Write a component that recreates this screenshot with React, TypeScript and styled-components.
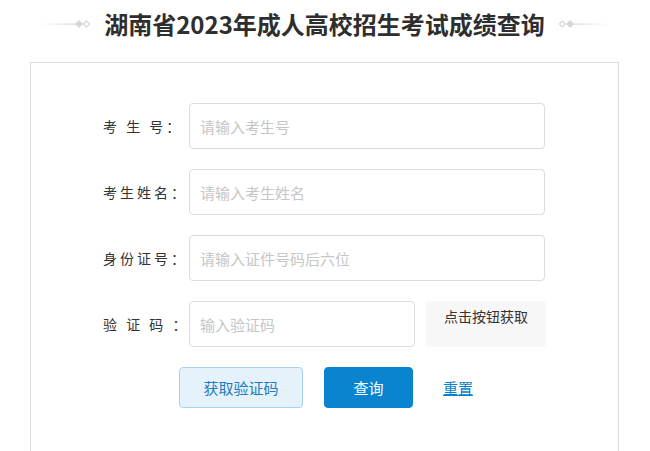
import React from "react";
import styled, { createGlobalStyle } from "styled-components";

const Global = createGlobalStyle`
  html, body { margin: 0; padding: 0; background: #fff; }
  body { font-family: "Noto Sans CJK SC", "Noto Sans", sans-serif; color: #333; }
  * { box-sizing: border-box; }
`;

const Page = styled.div`
  width: 650px;
  height: 451px;
  overflow: hidden;
  padding: 0 31px 0 30px;
`;

const Header = styled.div`
  display: flex;
  align-items: center;
  justify-content: center;
  gap: 13px;
  height: 48px;
  margin-bottom: 14px;
`;

const Title = styled.h1`
  margin: 0;
  font-size: 24px;
  font-weight: 700;
  color: #2e2e2e;
  line-height: 48px;
  letter-spacing: 0;
`;

const Card = styled.div`
  border: 1px solid #dcdcdc;
  border-bottom: none;
  padding: 40px 0 80px 72px;
  display: flex;
  flex-direction: column;
  gap: 20px;
`;

const Row = styled.div`
  display: flex;
  align-items: center;
  height: 46px;
`;

const Label = styled.label`
  width: 86px;
  flex: none;
  font-size: 14px;
  letter-spacing: 3px;
  color: #333;
  white-space: pre;
`;

const Input = styled.input<{ $w?: number }>`
  width: ${(p) => p.$w ?? 356}px;
  height: 46px;
  border: 1px solid #dcdcdc;
  border-radius: 4px;
  padding: 0 10px;
  font-family: inherit;
  font-size: 15px;
  color: #333;
  outline: none;
  &::placeholder { color: #c6c6c6; }
`;

const CodeBox = styled.div`
  margin-left: 11px;
  width: 120px;
  height: 46px;
  background: #f7f7f7;
  border-radius: 4px;
  font-size: 14px;
  color: #333;
  text-align: center;
  line-height: 30px;
`;

const Actions = styled.div`
  display: flex;
  align-items: center;
  padding-left: 76px;
`;

const Button = styled.button<{ $primary?: boolean; $w: number }>`
  width: ${(p) => p.$w}px;
  height: 41px;
  border-radius: 4px;
  font-family: inherit;
  font-size: 15px;
  cursor: pointer;
  border: 1px solid ${(p) => (p.$primary ? "#0a84cf" : "#a9d2f0")};
  background: ${(p) => (p.$primary ? "#0a84cf" : "#e6f2fb")};
  color: ${(p) => (p.$primary ? "#fff" : "#1a7cc4")};
  padding: 0;
`;

const ResetLink = styled.a`
  margin-left: 30px;
  font-size: 15px;
  color: #0a7fcc;
  text-decoration: underline;
  cursor: pointer;
`;

const Ornament = ({ flip }: { flip?: boolean }) => (
  <svg width="52" height="12" viewBox="0 0 52 12" style={{ transform: flip ? "scaleX(-1)" : undefined }}>
    <defs>
      <linearGradient id={flip ? "gr" : "gl"} x1="0" x2="1" y1="0" y2="0">
        <stop offset="0" stopColor="#e0e0e0" stopOpacity="0" />
        <stop offset="1" stopColor="#d4d4d4" />
      </linearGradient>
    </defs>
    <rect x="0" y="5.5" width="37" height="1.2" fill={`url(#${flip ? "gr" : "gl"})`} />
    <path d="M36 6 L40 2 L44 6 L40 10 Z" fill="#d6d6d6" />
    <path d="M44.5 6 L47.5 3 L50.5 6 L47.5 9 Z" fill="none" stroke="#d6d6d6" strokeWidth="1.2" />
  </svg>
);

export default function App() {
  return (
    <>
      <Global />
      <Page>
        <Header>
          <Ornament />
          <Title>湖南省2023年成人高校招生考试成绩查询</Title>
          <Ornament flip />
        </Header>
        <Card>
          <Row>
            <Label>考 生 号：</Label>
            <Input placeholder="请输入考生号" />
          </Row>
          <Row>
            <Label>考生姓名：</Label>
            <Input placeholder="请输入考生姓名" />
          </Row>
          <Row>
            <Label>身份证号：</Label>
            <Input placeholder="请输入证件号码后六位" />
          </Row>
          <Row>
            <Label>验 证 码 ：</Label>
            <Input $w={226} placeholder="输入验证码" />
            <CodeBox>点击按钮获取</CodeBox>
          </Row>
          <Actions>
            <Button $w={124}>获取验证码</Button>
            <Button $w={89} $primary style={{ marginLeft: 21 }}>查询</Button>
            <ResetLink>重置</ResetLink>
          </Actions>
        </Card>
      </Page>
    </>
  );
}
